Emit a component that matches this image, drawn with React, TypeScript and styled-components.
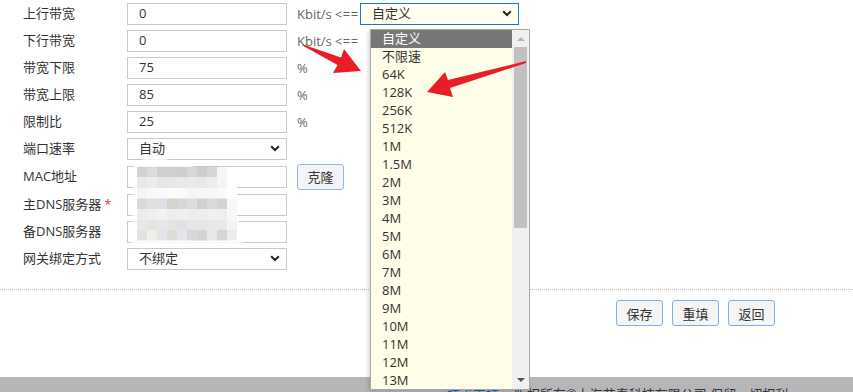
import React from 'react'
import styled, { createGlobalStyle } from 'styled-components'

const GlobalStyle = createGlobalStyle`
  html, body {
    margin: 0;
    padding: 0;
    background: #fff;
    overflow: hidden;
  }
  body {
    font-family: "Open Sans", "Noto Sans CJK SC", sans-serif;
    font-size: 13px;
    color: #333;
  }
  * {
    box-sizing: border-box;
  }
`

const Page = styled.div`
  position: relative;
  width: 853px;
  height: 392px;
  overflow: hidden;
  display: flex;
  flex-direction: column;
`

const Form = styled.div`
  display: flex;
  flex-direction: column;
`

const Row = styled.div<{ $tall?: boolean }>`
  display: flex;
  align-items: center;
  height: ${({ $tall }) => ($tall ? '29px' : '27px')};
`

const Label = styled.div`
  width: 127px;
  padding-left: 23px;
  white-space: nowrap;
  color: #333;
  line-height: 1;
`

const Required = styled.span`
  color: #e33;
  margin-left: 3px;
`

const Field = styled.div<{ $active?: boolean; $width?: number }>`
  display: flex;
  align-items: center;
  justify-content: space-between;
  width: ${({ $width }) => $width ?? 160}px;
  height: 22px;
  padding: 0 6px 0 11px;
  border: 1px solid ${({ $active }) => ($active ? '#1f76d2' : '#c9c9c9')};
  background: ${({ $active }) => ($active ? '#fffff2' : '#fff')};
  color: #333;
  line-height: 1;
`

const Unit = styled.div`
  margin-left: 10px;
  color: #666;
  white-space: nowrap;
  width: 63px;
`

const Arrow = styled.span`
  letter-spacing: 0.5px;
  margin-left: 3px;
`

const CloneButton = styled.button`
  margin-left: 10px;
  width: 47px;
  height: 26px;
  border: 1px solid #8bb9ea;
  border-radius: 3px;
  background: #f4f4f4;
  color: #333;
  font: inherit;
  padding: 0;
`

const Divider = styled.div`
  margin-top: 17px;
  border-top: 1px dotted #b8b8b8;
`

const Actions = styled.div`
  display: flex;
  gap: 9px;
  padding-left: 616px;
  margin-top: 10px;
`

const ActionButton = styled.button`
  width: 47px;
  height: 26px;
  border: 1px solid #7fb1e8;
  border-radius: 3px;
  background: #f5f5f5;
  color: #333;
  font: inherit;
  padding: 0;
`

const Footer = styled.div`
  margin-top: auto;
  height: 15px;
  background: #b6b6b9;
  padding-left: 447px;
  padding-top: 11px;
  display: flex;
  gap: 15px;
  white-space: nowrap;
  line-height: 1;
`

const FooterLink = styled.span`
  color: #2a5fa8;
`

const FooterText = styled.span`
  color: #333;
`

const Dropdown = styled.div`
  position: absolute;
  left: 370px;
  top: 29px;
  width: 160px;
  height: 361px;
  border: 1px solid #a8a8a8;
  background: #fffee8;
  box-shadow: -2px 2px 4px rgba(0, 0, 0, 0.15);
  display: flex;
`

const OptionList = styled.div`
  flex: 1;
  display: flex;
  flex-direction: column;
`

const Option = styled.div<{ $selected?: boolean }>`
  height: 18px;
  padding-left: 11px;
  display: flex;
  align-items: center;
  line-height: 1;
  background: ${({ $selected }) => ($selected ? '#777' : 'transparent')};
  color: ${({ $selected }) => ($selected ? '#fff' : '#333')};
`

const Scrollbar = styled.div`
  width: 17px;
  background: #f0f0f0;
  display: flex;
  flex-direction: column;
  align-items: center;
`

const ScrollArrow = styled.div`
  height: 17px;
  display: flex;
  align-items: center;
  justify-content: center;
`

const Thumb = styled.div`
  width: 13px;
  height: 181px;
  background: #c1c1c1;
`

const Spacer = styled.div`
  flex: 1;
`

const Overlay = styled.svg`
  position: absolute;
  left: 0;
  top: 0;
  pointer-events: none;
`

const Chevron = () => (
  <svg width="10" height="7" viewBox="0 0 10 7">
    <path d="M1.2 1.2 L5 5 L8.8 1.2" fill="none" stroke="#222" strokeWidth="2" />
  </svg>
)

const options = ['自定义', '不限速', '64K', '128K', '256K', '512K', '1M', '1.5M', '2M', '3M', '4M', '5M', '6M', '7M', '8M', '9M', '10M', '11M', '12M', '13M']

const mosaic: string[][] = [
  ['#d2d2d2', '#dcdcdc', '#cfcfcf', '#d1ced1', '#cdcdcd', '#d8d8d8', '#d0cdd0', '#d5d5d5', '#f6f6f6', '#fff'],
  ['#e9e9e9', '#ececec', '#e6e6e6', '#e8e8e8', '#e9e9e9', '#eaeaea', '#e8e8e8', '#ececec', '#f4f4f4', '#fff'],
  ['#f4f4f4', '#f8f8f8', '#fafafa', '#fbfbfb', '#fafafa', '#f6f6f6', '#f7f7f7', '#f7f7f7', '#fafafa', '#fff'],
  ['#d9d9d9', '#e1e1dc', '#e0dde5', '#d5d2d0', '#d4d8dc', '#dcdcdc', '#d0d0d0', '#dcdad8', '#d1d5d9', '#f8f8f8'],
  ['#ececec', '#eeeeee', '#f2f2f0', '#eeeeee', '#f0f0f2', '#ededed', '#eeeeee', '#f0f0f0', '#eeeeee', '#f7f7f7'],
  ['#e8e8e8', '#e4e4e4', '#e6e6e6', '#e4e4e6', '#e2e2e2', '#e6e6e6', '#e6e6e6', '#e8e8e8', '#e9e9e9', '#f3f3f3'],
  ['#e2e2e2', '#eef0e8', '#e4e2ea', '#dddcd8', '#e4e6ea', '#d8d8dc', '#d4d4d4', '#e8e8e8', '#d5d5d9', '#ececec'],
]

export default function App() {
  return (
    <>
      <GlobalStyle />
      <Page>
        <Form>
          <Row>
            <Label>上行带宽</Label>
            <Field>0</Field>
            <Unit>
              Kbit/s<Arrow>&lt;==</Arrow>
            </Unit>
            <Field $active $width={159}>
              自定义
              <Chevron />
            </Field>
          </Row>
          <Row>
            <Label>下行带宽</Label>
            <Field>0</Field>
            <Unit>
              Kbit/s<Arrow>&lt;==</Arrow>
            </Unit>
          </Row>
          <Row>
            <Label>带宽下限</Label>
            <Field>75</Field>
            <Unit>%</Unit>
          </Row>
          <Row>
            <Label>带宽上限</Label>
            <Field>85</Field>
            <Unit>%</Unit>
          </Row>
          <Row>
            <Label>限制比</Label>
            <Field>25</Field>
            <Unit>%</Unit>
          </Row>
          <Row>
            <Label>端口速率</Label>
            <Field>
              自动
              <Chevron />
            </Field>
          </Row>
          <Row $tall>
            <Label>MAC地址</Label>
            <Field />
            <CloneButton>克隆</CloneButton>
          </Row>
          <Row>
            <Label>
              主DNS服务器<Required>*</Required>
            </Label>
            <Field />
          </Row>
          <Row>
            <Label>备DNS服务器</Label>
            <Field />
          </Row>
          <Row>
            <Label>网关绑定方式</Label>
            <Field>
              不绑定
              <Chevron />
            </Field>
          </Row>
        </Form>
        <Divider />
        <Actions>
          <ActionButton>保存</ActionButton>
          <ActionButton>重填</ActionButton>
          <ActionButton>返回</ActionButton>
        </Actions>
        <Footer>
          <FooterLink>技术支持</FooterLink>
          <FooterText>版权所有©上海艾泰科技有限公司 保留一切权利</FooterText>
        </Footer>

        <Overlay width="853" height="392" viewBox="0 0 853 392">
          <path d="M134 161 C 190 150, 238 182, 243 244 L 131 244 Z" fill="#fff" opacity="0.8" />
          {mosaic.map((row, r) =>
            row.map((c, i) => (
              <rect key={`${r}-${i}`} x={137 + i * 10} y={167 + r * 10.5} width="10" height="10.5" fill={c} />
            )),
          )}
        </Overlay>

        <Dropdown>
          <OptionList>
            {options.map((o, i) => (
              <Option key={o} $selected={i === 0}>
                {o}
              </Option>
            ))}
          </OptionList>
          <Scrollbar>
            <ScrollArrow>
              <svg width="8" height="5" viewBox="0 0 8 5">
                <path d="M0 5 L4 1 L8 5 Z" fill="#b5b5b5" />
              </svg>
            </ScrollArrow>
            <Thumb />
            <Spacer />
            <ScrollArrow>
              <svg width="8" height="5" viewBox="0 0 8 5">
                <path d="M0 0 L4 4 L8 0 Z" fill="#555" />
              </svg>
            </ScrollArrow>
          </Scrollbar>
        </Dropdown>

        <Overlay width="853" height="392" viewBox="0 0 853 392">
          <polygon points="303,44.5 341,57.5 344,49 361,71 333,73 337.5,65 302.5,45.5" fill="#e81e26" />
          <polygon points="526,61 448,80 445,72 427,92 453,97 450,88 526,63" fill="#e81e26" />
        </Overlay>
      </Page>
    </>
  )
}
